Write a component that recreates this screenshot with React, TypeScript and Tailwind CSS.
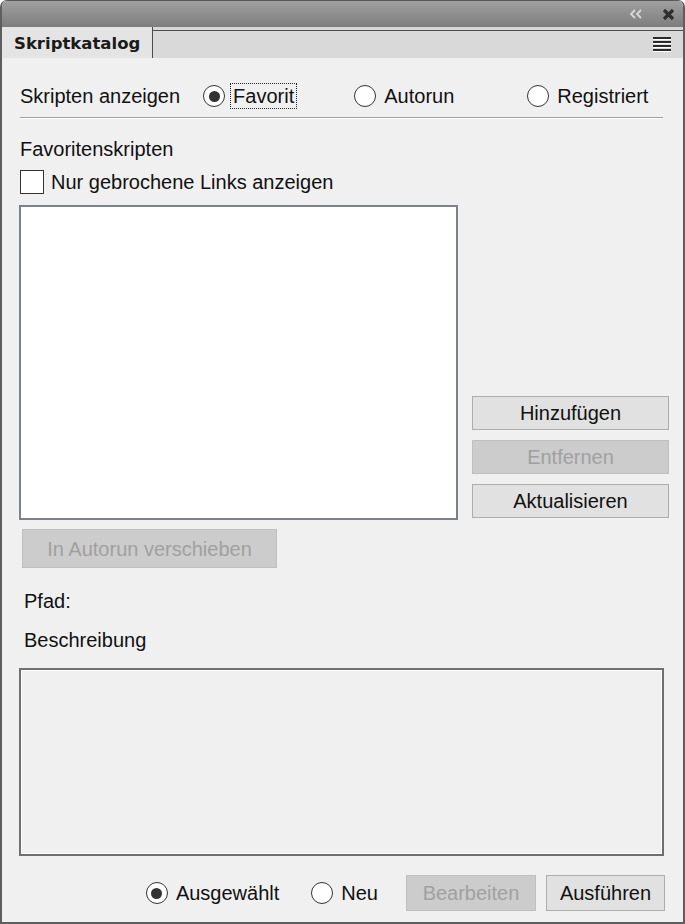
import React from "react";

const font = { fontFamily: '"Liberation Sans", Arial, sans-serif' };

function Radio({ checked }: { checked?: boolean }) {
  return (
    <span className="w-[22px] h-[22px] rounded-full border-[1.5px] border-[#333333] bg-white flex items-center justify-center shrink-0">
      {checked && <span className="w-[11px] h-[11px] rounded-full bg-[#333333]" />}
    </span>
  );
}

function Btn({ children, disabled, className = "" }: { children: React.ReactNode; disabled?: boolean; className?: string }) {
  return (
    <div
      className={
        "flex items-center justify-center border text-[20px] shrink-0 " +
        (disabled
          ? "bg-[#cccccc] border-[#bfbfbf] text-[#a0a0a0] "
          : "bg-[#e1e1e1] border-[#adadad] text-[#111111] ") +
        className
      }
    >
      {children}
    </div>
  );
}

export default function App() {
  return (
    <div
      className="w-[685px] h-[924px] bg-[#f0f0f0] flex flex-col border-x-2 border-b-2 border-[#5e5e5e] rounded-t-[7px] overflow-hidden text-[#111111]"
      style={font}
    >
      {/* title bar */}
      <div className="h-[27px] bg-gradient-to-b from-[#a0a0a0] to-[#7d7d7d] border-t border-[#5a5a5a] flex items-center justify-end pr-[8px] shrink-0">
        <svg width="14" height="10" viewBox="0 0 14 10" className="mr-[19px]">
          <path d="M6 1 L2 5 L6 9 M12 1 L8 5 L12 9" stroke="#d8d8d8" strokeWidth="1.8" fill="none" />
        </svg>
        <svg width="13" height="13" viewBox="0 0 13 13">
          <path d="M2 2 L11 11 M11 2 L2 11" stroke="#2e2e2e" strokeWidth="3.2" fill="none" />
        </svg>
      </div>
      {/* tab strip */}
      <div className="h-[31px] bg-[#d6d6d6] flex shrink-0">
        <div
          className="w-[151px] bg-[#e4e4e4] border-r border-[#4d4d4d] flex items-center pl-[12px] pt-[3px] font-bold text-[#1a1a1a] text-[16.5px]"
          style={{ fontFamily: '"DejaVu Sans", sans-serif' }}
        >
          Skriptkatalog
        </div>
        <div className="flex-1 border-t border-[#4d4d4d] mt-[3px] flex items-center justify-end pr-[12px] bg-[#d9d9d9]">
          <div className="flex flex-col gap-[1px]">
            {[0, 1, 2, 3].map((i) => (
              <div key={i} className="w-[18px] h-[2px] bg-[#2a2a2a] border-b border-white box-content" />
            ))}
          </div>
        </div>
      </div>
      {/* body */}
      <div className="flex-1 flex flex-col pl-[17px] pr-[18px] text-[20px]">
        <div className="mt-[24px] h-[28px] flex items-center">
          <span className="ml-[1px]">Skripten anzeigen</span>
          <span className="ml-[23px] flex items-center">
            <Radio checked />
            <span className="ml-[5px] px-[2px] border border-dotted border-[#222] leading-[24px]">Favorit</span>
          </span>
          <span className="ml-[57px] flex items-center">
            <Radio />
            <span className="ml-[8px]">Autorun</span>
          </span>
          <span className="ml-[73px] flex items-center">
            <Radio />
            <span className="ml-[8px]">Registriert</span>
          </span>
        </div>
        <div className="mt-[7px] mr-[2px] ml-[1px] h-[2px] border-t border-[#a0a0a0] border-b border-b-white" />
        <div className="mt-[18px] h-[24px] flex items-center ml-[1px]">Favoritenskripten</div>
        <div className="mt-[9px] h-[24px] flex items-center ml-[1px]">
          <span className="w-[24px] h-[24px] border-[1.5px] border-[#333333] bg-white shrink-0" />
          <span className="ml-[7px]">Nur gebrochene Links anzeigen</span>
        </div>
        <div className="mt-[11px] flex items-end">
          <div className="w-[439px] h-[315px] bg-white border-2 border-[#7d828a] shrink-0" />
          <div className="ml-[14px] w-[197px] flex flex-col gap-[10px] mb-[2px] shrink-0">
            <Btn className="h-[34px]">Hinzufügen</Btn>
            <Btn disabled className="h-[34px]">Entfernen</Btn>
            <Btn className="h-[34px]">Aktualisieren</Btn>
          </div>
        </div>
        <Btn disabled className="mt-[9px] ml-[3px] w-[255px] h-[39px]">In Autorun verschieben</Btn>
        <div className="mt-[21px] h-[24px] flex items-center ml-[5px]">Pfad:</div>
        <div className="mt-[15px] h-[24px] flex items-center ml-[5px]">Beschreibung</div>
        <div className="mt-[16px] w-[645px] h-[188px] border-2 border-[#6f6f6f] shadow-[inset_0_0_0_1px_#ffffff] bg-[#f0f0f0]" />
        <div className="mt-[19px] h-[36px] flex items-center justify-end">
          <Radio checked />
          <span className="ml-[8px]">Ausgewählt</span>
          <span className="ml-[32px]">
            <Radio />
          </span>
          <span className="ml-[8px]">Neu</span>
          <Btn disabled className="ml-[28px] w-[130px] h-[36px]">Bearbeiten</Btn>
          <Btn className="ml-[10px] w-[119px] h-[36px]">Ausführen</Btn>
        </div>
      </div>
    </div>
  );
}
